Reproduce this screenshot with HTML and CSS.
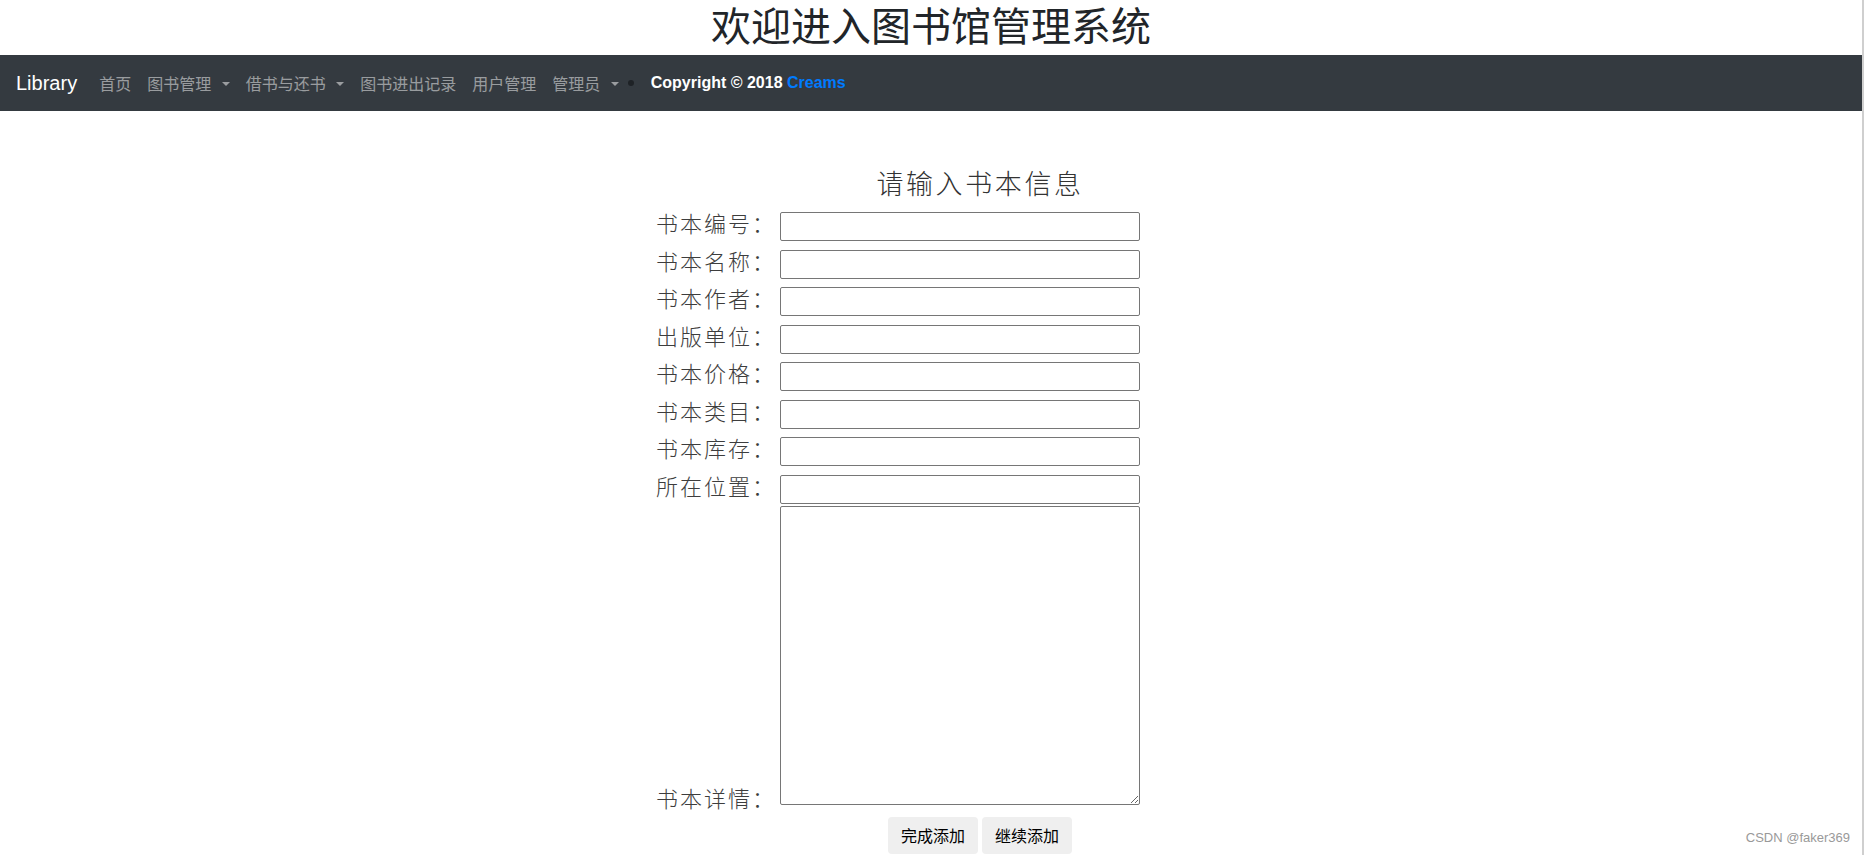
FILE: index.html
```html
<!DOCTYPE html>
<html lang="zh-CN">
<head>
<meta charset="utf-8">
<title>图书馆管理系统</title>
<link rel="stylesheet" href="styles.css">
</head>
<body>
<div class="page">
  <h1 class="site-title">欢迎进入图书馆管理系统</h1>
  <nav class="navbar">
    <a class="brand" href="#">Library</a>
    <ul class="nav">
      <li><a class="nav-link" href="#">首页</a></li>
      <li><a class="nav-link dropdown" href="#">图书管理</a></li>
      <li><a class="nav-link dropdown" href="#">借书与还书</a></li>
      <li><a class="nav-link" href="#">图书进出记录</a></li>
      <li><a class="nav-link" href="#">用户管理</a></li>
      <li><a class="nav-link dropdown" href="#">管理员</a></li>
    </ul>
    <span class="dot"></span>
    <span class="copyright">Copyright © 2018 <span class="creams">Creams</span></span>
  </nav>
  <main class="content">
    <form class="book-form">
      <h2 class="form-title">请输入书本信息</h2>
      <div class="row"><label class="label">书本编号：</label><input class="field" type="text"></div>
      <div class="row"><label class="label">书本名称：</label><input class="field" type="text"></div>
      <div class="row"><label class="label">书本作者：</label><input class="field" type="text"></div>
      <div class="row"><label class="label">出版单位：</label><input class="field" type="text"></div>
      <div class="row"><label class="label">书本价格：</label><input class="field" type="text"></div>
      <div class="row"><label class="label">书本类目：</label><input class="field" type="text"></div>
      <div class="row"><label class="label">书本库存：</label><input class="field" type="text"></div>
      <div class="row row-last"><label class="label">所在位置：</label><input class="field" type="text"></div>
      <div class="row row-area"><label class="label label-area">书本详情：</label><textarea class="area"></textarea></div>
      <div class="actions">
        <button class="btn" type="button">完成添加</button>
        <button class="btn" type="button">继续添加</button>
      </div>
    </form>
  </main>
  <div class="watermark">CSDN @faker369</div>
</div>
</body>
</html>
```
FILE: styles.css
```css
* { box-sizing: border-box; }
html, body { margin: 0; padding: 0; background: #fff; }
body {
  font-family: "Liberation Sans", "Noto Sans CJK SC", sans-serif;
  color: #212529;
}
.page {
  position: relative;
  width: 1864px;
  height: 855px;
  border-right: 2px solid #cfcfcf;
  overflow: hidden;
}
.site-title {
  margin: 0 0 7px;
  font-family: "Noto Sans CJK SC", sans-serif;
  font-weight: 400;
  font-size: 40px;
  line-height: 48px;
  text-align: center;
  color: #212529;
}
.navbar {
  display: flex;
  align-items: center;
  height: 56px;
  padding: 0 16px;
  background: #343a40;
}
.brand {
  font-family: "Liberation Sans", sans-serif;
  font-size: 20px;
  line-height: 30px;
  color: #fff;
  text-decoration: none;
  margin-right: 14px;
}
.nav {
  display: flex;
  list-style: none;
  margin: 0;
  padding: 0;
}
.nav-link {
  display: block;
  padding: 0 8px;
  font-family: "Noto Sans CJK SC", sans-serif;
  font-size: 16px;
  line-height: 24px;
  color: rgba(255, 255, 255, 0.5);
  text-decoration: none;
}
.dropdown::after {
  content: "";
  display: inline-block;
  margin-left: 10.5px;
  vertical-align: 0.255em;
  border-top: 0.3em solid;
  border-right: 0.3em solid transparent;
  border-left: 0.3em solid transparent;
}
.dot {
  width: 6px;
  height: 6px;
  border-radius: 50%;
  background: #1e2226;
  margin-left: 1px;
  margin-right: 17px;
}
.copyright {
  font-family: "Liberation Sans", sans-serif;
  font-weight: 700;
  font-size: 16px;
  color: #fff;
}
.creams { color: #007bff; }

.content { padding-top: 54px; }
.book-form {
  margin-left: 656px;
  width: 648px;
}
.form-title {
  margin: 0 0 11px;
  font-family: "Noto Sans CJK SC", sans-serif;
  font-weight: 300;
  font-size: 27px;
  line-height: 36px;
  letter-spacing: 2.6px;
  text-align: center;
  color: #333;
}
.row {
  display: flex;
  align-items: flex-start;
  margin-bottom: 8.5px;
}
.row-last { margin-bottom: 2px; }
.row-area { align-items: flex-end; margin-bottom: 0; }
.label {
  width: 124px;
  font-family: "Noto Sans CJK SC", sans-serif;
  font-weight: 300;
  font-size: 22px;
  line-height: 20px;
  letter-spacing: 2px;
  color: #3d3d3d;
}
.label-area { margin-bottom: -2px; }
.field {
  width: 360px;
  height: 29px;
  margin: 0;
  padding: 1px 3px;
  border: 1px solid #767676;
  border-radius: 2px;
  font-size: 13px;
  background: #fff;
}
.area {
  width: 360px;
  height: 299px;
  margin: 0;
  padding: 2px;
  border: 1px solid #767676;
  border-radius: 2px;
  background: #fff;
}
.actions {
  display: flex;
  justify-content: center;
  gap: 4px;
  margin-top: 12px;
}
.btn {
  height: 37px;
  padding: 0 13px;
  border: 0;
  border-radius: 4px;
  background: #efefef;
  color: #000;
  font-family: "Noto Sans CJK SC", sans-serif;
  font-size: 16px;
  line-height: 37px;
}
.watermark {
  position: absolute;
  right: 12px;
  bottom: 10px;
  font-family: "Liberation Sans", sans-serif;
  font-size: 13px;
  color: #999;
}
```
